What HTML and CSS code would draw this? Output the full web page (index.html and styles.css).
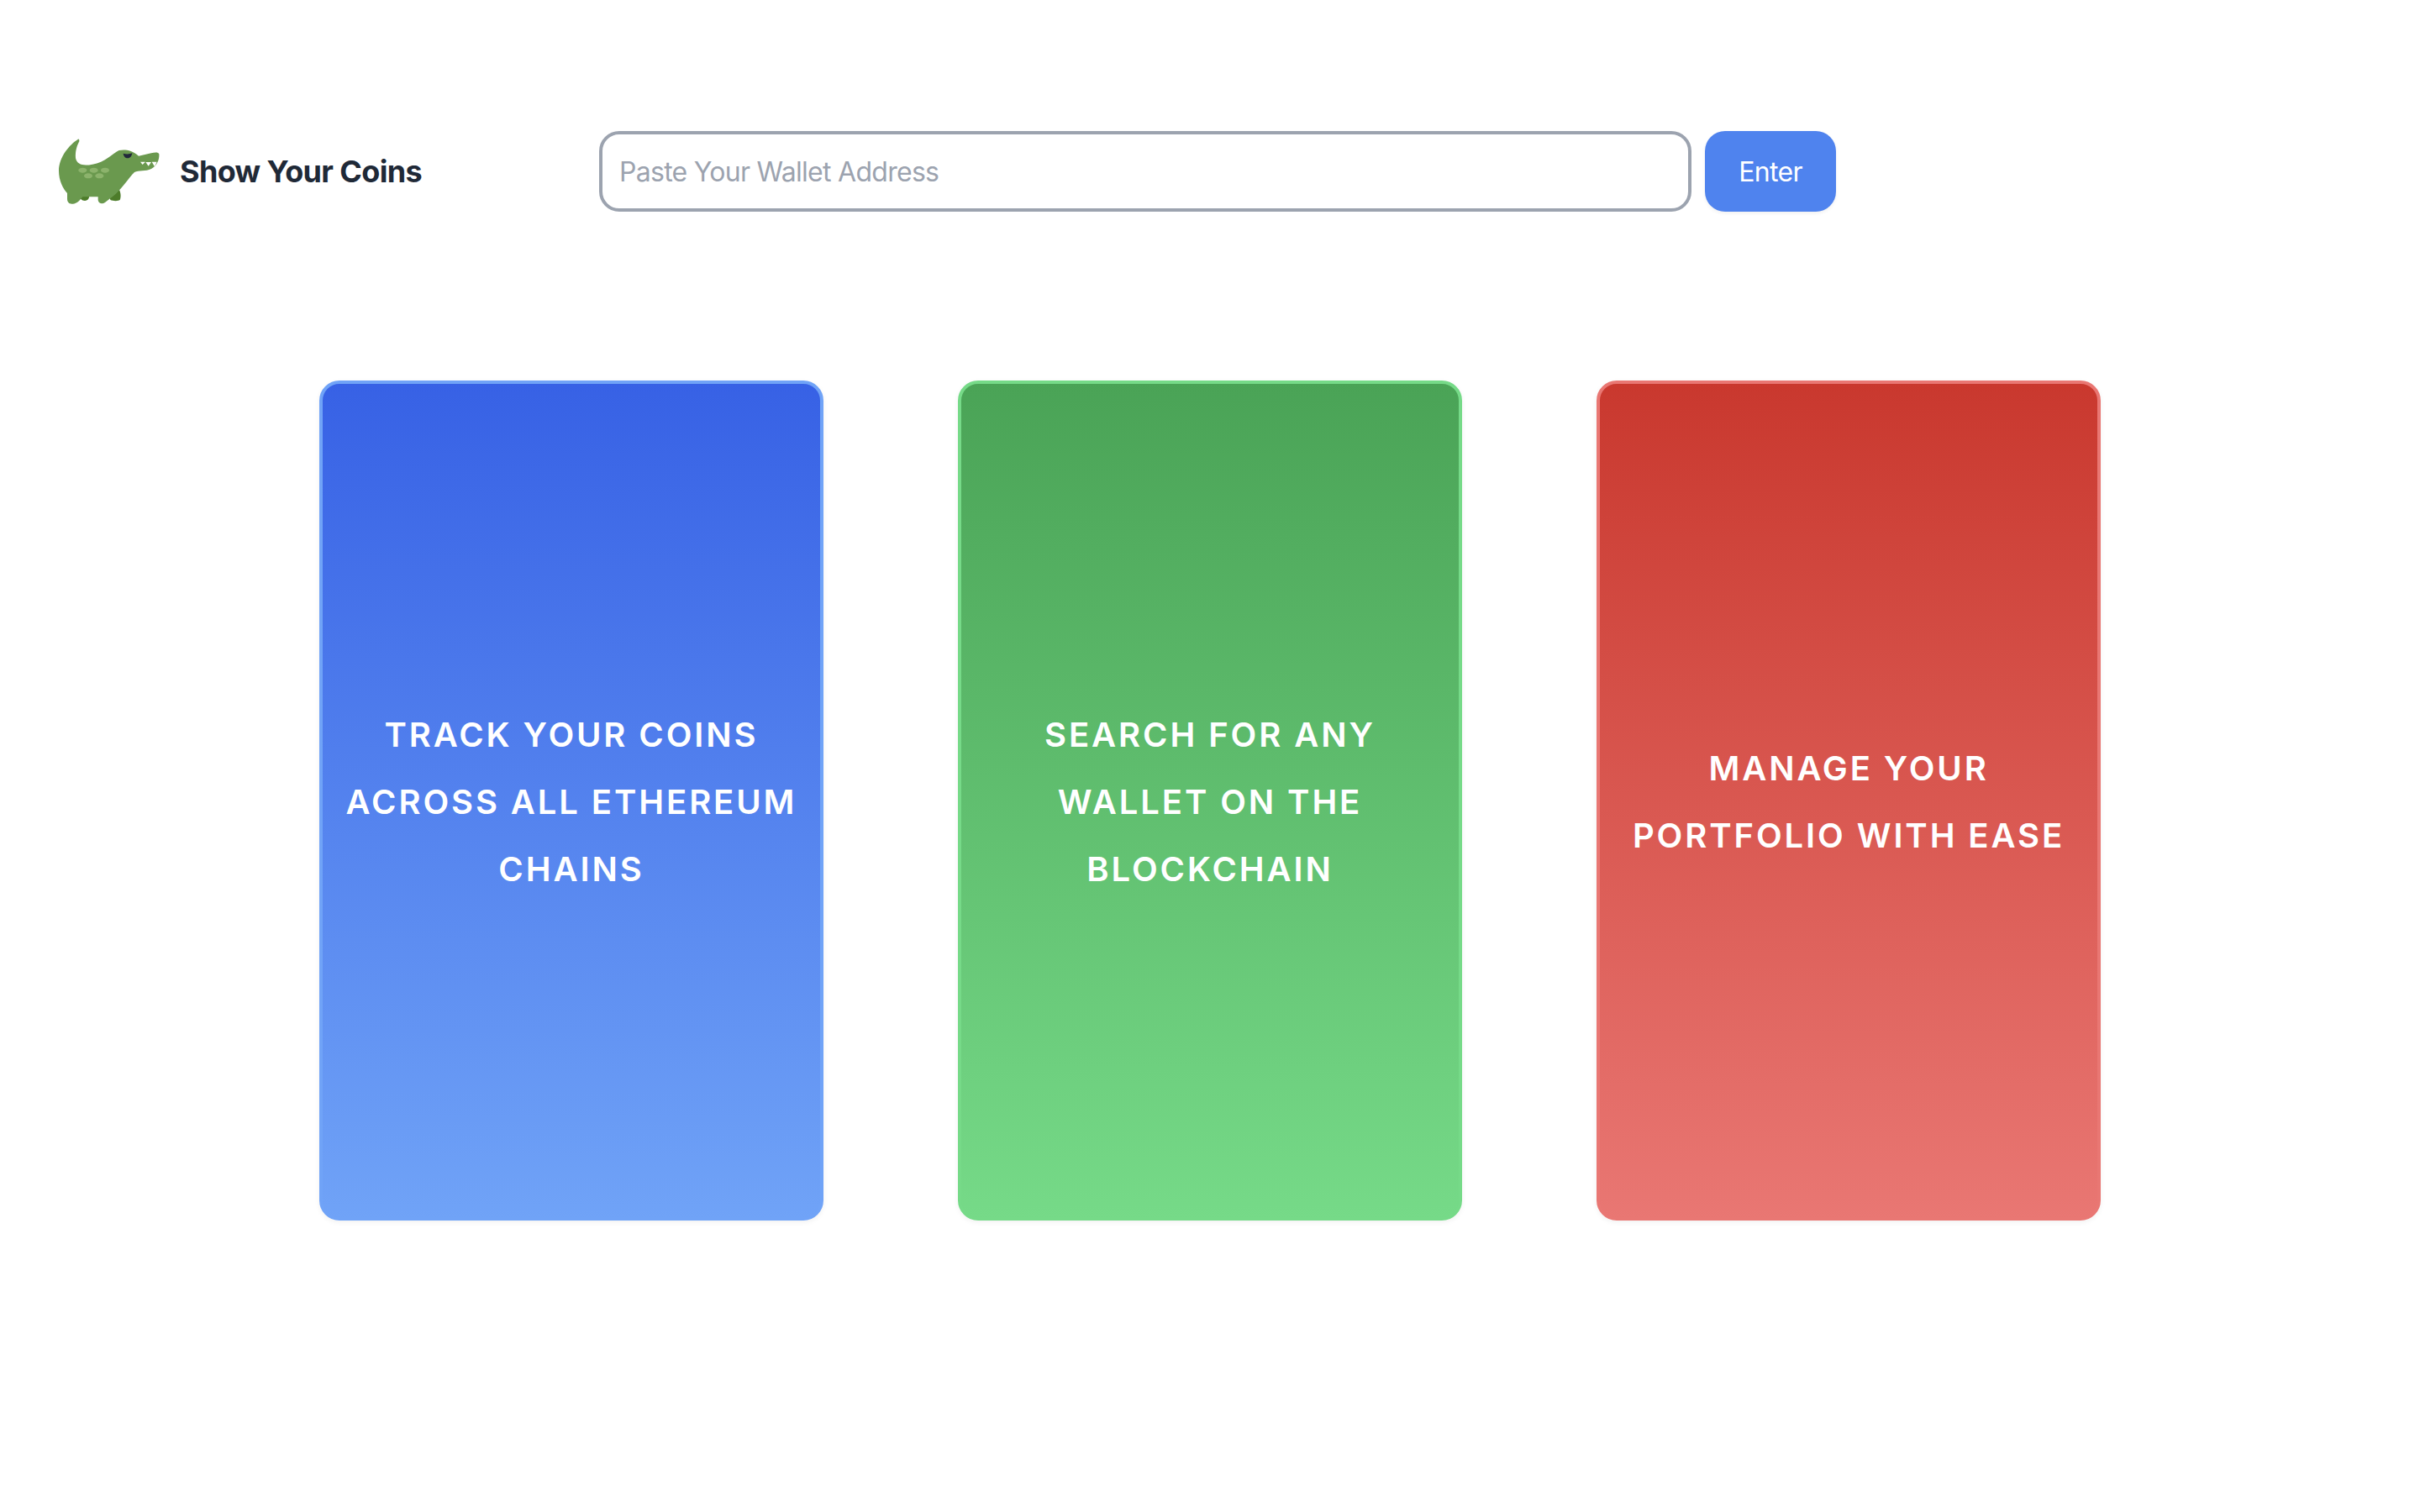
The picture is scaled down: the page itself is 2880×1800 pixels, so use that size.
FILE: index.html
```html
<!DOCTYPE html>
<html lang="en">
<head>
<meta charset="utf-8">
<title>Show Your Coins</title>
<link rel="stylesheet" href="styles.css">
</head>
<body>
<header class="header">
  <div class="brand">
    <svg class="logo" viewBox="0 0 420 285" aria-hidden="true">
      <path class="leg" d="M106 232h32c2 10-3 20-15 20s-20-8-17-20zM218 225l28-12c6 12 6 28 2 36-6 5-26 4-34 0-3-8 0-16 4-24z"/>
      <path class="body" d="M98 33C70 50 30 95 30 145c0 35 15 65 30 80v20c0 15 10 18 20 18 15 0 25-13 35-25h55v12c2 12 15 15 25 8l30-23c25-20 55-65 75-85 15-8 40-2 60-12 20-10 30-33 28-53-3-7-13-7-28-3l-45 10c-25-22-50-24-70-20-25 13-50 43-95 50-30 6-55 3-60-22-2-25 5-45 13-60 1-7-3-10-5-7z"/>
      <path class="eye" d="M260 83c10 3 22 3 32-1-1 10-7 18-16 18s-15-8-16-17z"/>
      <ellipse class="spot" cx="115" cy="143" rx="15" ry="9"/>
      <ellipse class="spot" cx="155" cy="143" rx="15" ry="9"/>
      <ellipse class="spot" cx="195" cy="143" rx="15" ry="9"/>
      <ellipse class="spot" cx="135" cy="163" rx="15" ry="9"/>
      <ellipse class="spot" cx="175" cy="163" rx="15" ry="9"/>
      <path class="tooth" d="M321 113h18l-10 10zM340 114h20l-10 14zM362 113h18l-8 17z"/>
    </svg>
    <span class="brand-name">Show Your Coins</span>
  </div>
  <form class="search">
    <input class="search-input" type="text" placeholder="Paste Your Wallet Address">
    <button class="search-button" type="button">Enter</button>
  </form>
</header>
<main class="cards">
  <section class="card card-blue"><p class="card-text">TRACK YOUR COINS ACROSS ALL ETHEREUM CHAINS</p></section>
  <section class="card card-green"><p class="card-text">SEARCH FOR ANY WALLET ON THE BLOCKCHAIN</p></section>
  <section class="card card-red"><p class="card-text">MANAGE YOUR PORTFOLIO WITH EASE</p></section>
</main>
</body>
</html>
```
FILE: styles.css
```css
* { box-sizing: border-box; }
html, body { margin: 0; padding: 0; }
body {
  width: 2880px;
  height: 1800px;
  background: #fff;
  font-family: Inter, "Liberation Sans", sans-serif;
  overflow: hidden;
}
.header {
  display: flex;
  align-items: center;
  padding: 156px 0 0 60px;
}
.brand {
  display: flex;
  align-items: center;
  width: 653px;
  height: 96px;
}
.logo {
  width: 140px;
  height: 95px;
  margin-right: 14px;
  margin-top: -3px;
  flex: none;
}
.brand-name {
  font-size: 36px;
  line-height: 56px;
  font-weight: 700;
  letter-spacing: -0.65px;
  white-space: nowrap;
  color: #1f2937;
}
.body { fill: #6a994e; }
.leg { fill: #4d7c2a; }
.eye { fill: #22293a; }
.spot { fill: #8cb36c; }
.tooth { fill: #fff; }
.search {
  display: flex;
  gap: 16px;
  margin: 0;
}
.search-input {
  width: 1300px;
  height: 96px;
  padding: 0 20px;
  border: 4px solid #9ca3af;
  border-radius: 24px;
  background: #fff;
  font-family: inherit;
  font-size: 32px;
  letter-spacing: -0.72px;
  color: #1f2937;
  outline: none;
}
.search-input::placeholder { color: #9ca3af; opacity: 1; }
.search-button {
  width: 156px;
  height: 96px;
  border: 0;
  border-radius: 24px;
  background: #4f83ee;
  box-shadow: 0 2px 4px rgba(0, 0, 0, 0.06);
  color: #fff;
  font-family: inherit;
  font-size: 32px;
  font-weight: 400;
  letter-spacing: -0.7px;
}
.cards {
  display: flex;
  justify-content: center;
  gap: 160px;
  margin-top: 201px;
}
.card {
  width: 600px;
  height: 1000px;
  display: flex;
  align-items: center;
  justify-content: center;
  padding: 3px 16px 0;
  border: 4px solid;
  border-radius: 24px;
  box-shadow: 0 2px 6px rgba(0, 0, 0, 0.06);
}
.card-text {
  margin: 0;
  text-align: center;
  color: #fff;
  font-size: 40px;
  line-height: 80px;
  font-weight: 600;
  letter-spacing: 2.9px;
}
.card-blue { border-color: #70a3f7; background: linear-gradient(#3761e5, #70a3f7) border-box; }
.card-green { border-color: #76da88; background: linear-gradient(#4aa356, #76da88) border-box; }
.card-red { border-color: #e97773; background: linear-gradient(#c9382e, #e97773) border-box; }
```
